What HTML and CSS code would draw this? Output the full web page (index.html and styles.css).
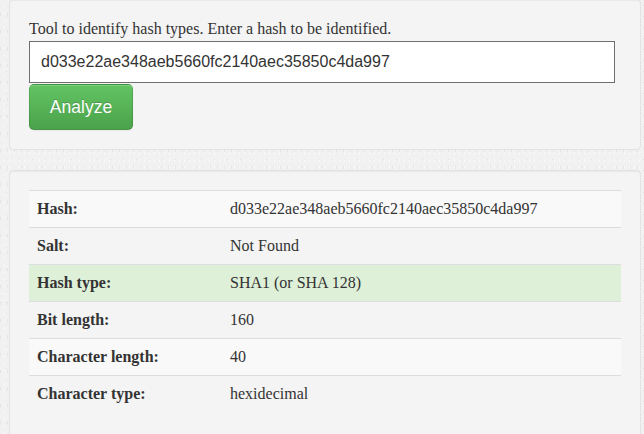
FILE: index.html
```html
<!DOCTYPE html>
<html>
<head>
<meta charset="utf-8">
<link rel="stylesheet" href="styles.css">
</head>
<body>
<div class="well well-form">
  <label class="intro" for="hash">Tool to identify hash types. Enter a hash to be identified.</label>
  <input id="hash" class="hash-input" type="text" value="d033e22ae348aeb5660fc2140aec35850c4da997">
  <button class="btn-analyze" type="button">Analyze</button>
</div>
<div class="well well-result">
  <table class="result-table">
    <tr class="odd"><th>Hash:</th><td>d033e22ae348aeb5660fc2140aec35850c4da997</td></tr>
    <tr><th>Salt:</th><td>Not Found</td></tr>
    <tr class="success"><th>Hash type:</th><td>SHA1 (or SHA 128)</td></tr>
    <tr><th>Bit length:</th><td>160</td></tr>
    <tr class="odd"><th>Character length:</th><td>40</td></tr>
    <tr><th>Character type:</th><td>hexidecimal</td></tr>
  </table>
</div>
</body>
</html>
```
FILE: styles.css
```css
html, body {
  margin: 0;
  padding: 0;
}
body {
  background-color: #f1f1f1;
  background-image:
    radial-gradient(rgba(0,0,0,0.07) 0.5px, transparent 0.9px),
    radial-gradient(rgba(0,0,0,0.05) 0.5px, transparent 0.9px),
    radial-gradient(rgba(255,255,255,0.8) 0.5px, transparent 0.9px);
  background-size: 13px 11px, 7px 17px, 5px 7px;
  background-position: 0 0, 4px 6px, 2px 3px;
  padding: 0 3px 0 9px;
  font-family: "Liberation Serif", "Times New Roman", serif;
  font-size: 16px;
  color: #333;
  height: 434px;
  overflow: hidden;
}
.well {
  background-color: #f4f4f4;
  border: 1px solid #e3e3e3;
  border-radius: 4px;
  box-shadow: inset 0 1px 1px rgba(0,0,0,0.05);
  padding: 19px;
}
.well-form {
  margin-top: -1px;
  display: flex;
  flex-direction: column;
  align-items: flex-start;
}
.intro {
  display: block;
  line-height: 20px;
  margin-bottom: 2px;
  margin-top: 0;
}
.hash-input {
  box-sizing: border-box;
  width: 586px;
  height: 42px;
  margin: 0;
  padding: 0 10px 0 11px;
  border: 1px solid #6e6e6e;
  border-radius: 0;
  background: #fff;
  font-family: "Liberation Sans", Arial, sans-serif;
  font-size: 16px;
  color: #333;
  outline: none;
}
.btn-analyze {
  box-sizing: border-box;
  margin-top: 1px;
  width: 104px;
  height: 46px;
  padding: 0;
  font-family: "Liberation Sans", Arial, sans-serif;
  font-size: 17.5px;
  color: #fff;
  text-shadow: 0 -1px 0 rgba(0,0,0,0.2);
  background-color: #5bb75b;
  background-image: linear-gradient(to bottom, #62c462, #4ba24b);
  border: 1px solid rgba(0,0,0,0.1);
  border-bottom-color: rgba(0,0,0,0.25);
  border-radius: 5px;
  box-shadow: inset 0 1px 0 rgba(255,255,255,0.2), 0 1px 2px rgba(0,0,0,0.05);
}
.well-result {
  margin-top: 20px;
  padding-bottom: 40px;
}
.result-table {
  width: 100%;
  border-collapse: collapse;
  border-spacing: 0;
}
.result-table th,
.result-table td {
  padding: 8px;
  line-height: 20px;
  text-align: left;
  vertical-align: top;
  border-top: 1px solid #dddddd;
}
.result-table th {
  width: 177px;
  font-weight: bold;
}
.result-table td {
  font-weight: normal;
}
.result-table tr.odd {
  background-color: #f9f9f9;
}
.result-table tr.success {
  background-color: #dff0d8;
}
```
